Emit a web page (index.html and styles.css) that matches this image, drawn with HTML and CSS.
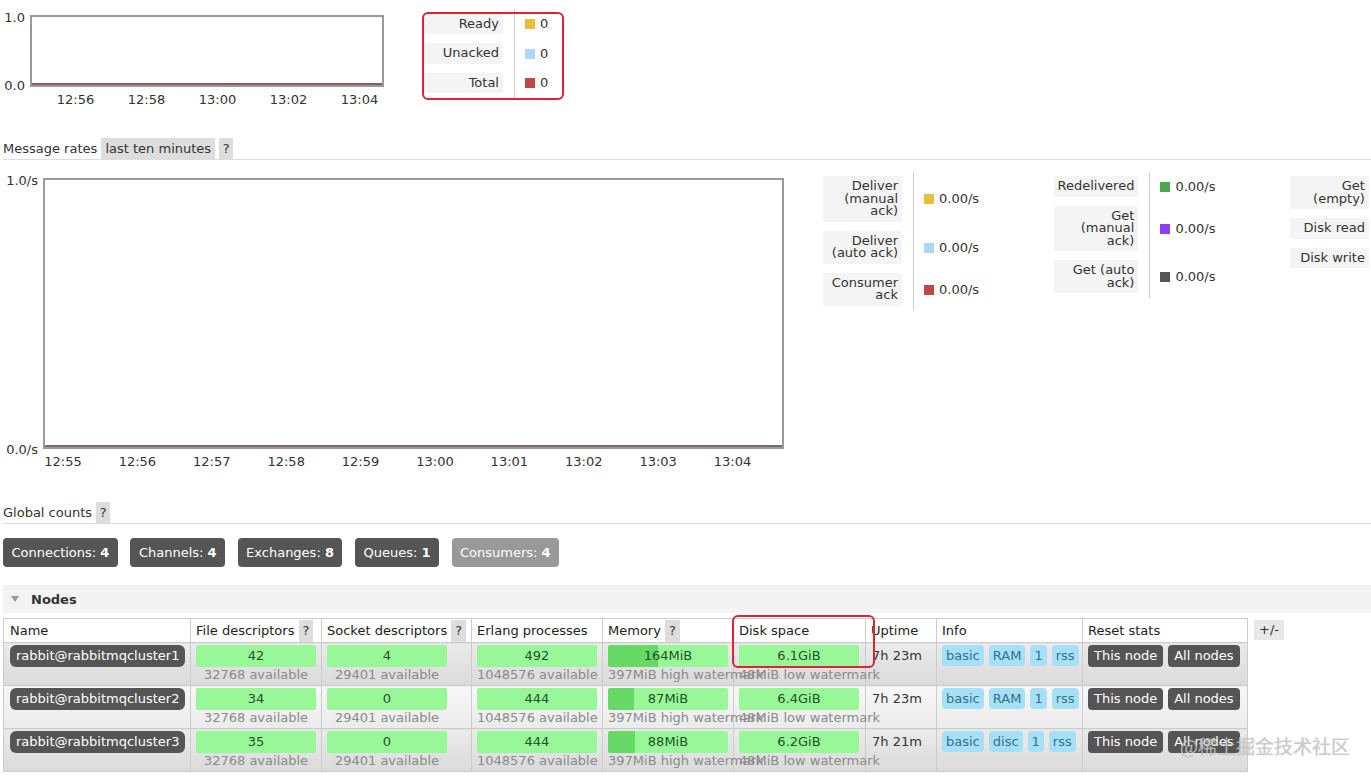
FILE: index.html
```html
<!DOCTYPE html>
<html>
<head>
<meta charset="utf-8">
<title>RabbitMQ Overview</title>
<link rel="stylesheet" href="styles.css">
</head>
<body>
<div class="page">
  <section class="queued">
    <div class="chart chart-small">
      <div class="yaxis"><span>1.0</span><span>0.0</span></div>
      <div class="plot"></div>
      <div class="xaxis"><span>12:56</span><span>12:58</span><span>13:00</span><span>13:02</span><span>13:04</span></div>
    </div>
    <div class="legend-wrap">
      <table class="legend">
        <tr><th><div class="lbl">Ready</div></th><td><span class="sw c-yellow"></span>0</td></tr>
        <tr><th><div class="lbl">Unacked</div></th><td><span class="sw c-blue"></span>0</td></tr>
        <tr><th><div class="lbl">Total</div></th><td><span class="sw c-red"></span>0</td></tr>
      </table>
      <span class="annot annot-top"></span>
    </div>
  </section>

  <h3 class="sub-h">Message rates <span class="opt">last ten minutes</span> <span class="help">?</span></h3>

  <section class="rates">
    <div class="chart chart-large">
      <div class="yaxis"><span>1.0/s</span><span>0.0/s</span></div>
      <div class="plot"></div>
      <div class="xaxis"><span>12:55</span><span>12:56</span><span>12:57</span><span>12:58</span><span>12:59</span><span>13:00</span><span>13:01</span><span>13:02</span><span>13:03</span><span>13:04</span></div>
    </div>
    <div class="legends">
      <table class="legend">
        <tr><th><div class="lbl">Deliver (manual ack)</div></th><td><span class="sw c-yellow"></span>0.00/s</td></tr>
        <tr><th><div class="lbl">Deliver (auto ack)</div></th><td><span class="sw c-blue"></span>0.00/s</td></tr>
        <tr><th><div class="lbl">Consumer ack</div></th><td><span class="sw c-red"></span>0.00/s</td></tr>
      </table>
      <table class="legend">
        <tr><th><div class="lbl">Redelivered</div></th><td><span class="sw c-green"></span>0.00/s</td></tr>
        <tr><th><div class="lbl">Get (manual ack)</div></th><td><span class="sw c-purple"></span>0.00/s</td></tr>
        <tr><th><div class="lbl">Get (auto ack)</div></th><td><span class="sw c-gray"></span>0.00/s</td></tr>
      </table>
      <table class="legend">
        <tr><th><div class="lbl">Get (empty)</div></th><td><span class="sw c-yellow"></span>0.00/s</td></tr>
        <tr><th><div class="lbl">Disk read</div></th><td><span class="sw c-blue"></span>0.00/s</td></tr>
        <tr><th><div class="lbl">Disk write</div></th><td><span class="sw c-red"></span>0.00/s</td></tr>
      </table>
    </div>
  </section>

  <h3 class="sub-h sub-h-counts">Global counts <span class="help">?</span></h3>

  <div class="counts">
    <span class="count">Connections: <b>4</b></span>
    <span class="count">Channels: <b>4</b></span>
    <span class="count">Exchanges: <b>8</b></span>
    <span class="count">Queues: <b>1</b></span>
    <span class="count count-light">Consumers: <b>4</b></span>
  </div>

  <div class="section-h"><span class="tri"></span>Nodes</div>

  <div class="nodes-wrap">
    <table class="nodes">
      <colgroup>
        <col class="w-name"><col class="w-fd"><col class="w-sd"><col class="w-ep"><col class="w-mem"><col class="w-disk"><col class="w-up"><col class="w-info"><col class="w-reset">
      </colgroup>
      <thead>
        <tr>
          <th>Name</th>
          <th>File descriptors <span class="help">?</span></th>
          <th>Socket descriptors <span class="help">?</span></th>
          <th>Erlang processes</th>
          <th>Memory <span class="help">?</span></th>
          <th class="th-disk">Disk space<span class="annot annot-disk"></span></th>
          <th>Uptime</th>
          <th>Info</th>
          <th>Reset stats</th>
        </tr>
      </thead>
      <tbody>
        <tr class="alt1">
          <td><span class="node-name">rabbit@rabbitmqcluster1</span></td>
          <td><div class="bar">42</div><div class="sub">32768 available</div></td>
          <td><div class="bar">4</div><div class="sub">29401 available</div></td>
          <td><div class="bar">492</div><div class="sub">1048576 available</div></td>
          <td><div class="bar bar-mem" style="--pct: 41.3%">164MiB</div><div class="sub">397MiB high watermark</div></td>
          <td><div class="bar">6.1GiB</div><div class="sub">48MiB low watermark</div></td>
          <td class="up">7h 23m</td>
          <td><span class="badge">basic</span><span class="badge">RAM</span><span class="badge">1</span><span class="badge">rss</span></td>
          <td><span class="btn">This node</span><span class="btn">All nodes</span></td>
        </tr>
        <tr class="alt2">
          <td><span class="node-name">rabbit@rabbitmqcluster2</span></td>
          <td><div class="bar">34</div><div class="sub">32768 available</div></td>
          <td><div class="bar">0</div><div class="sub">29401 available</div></td>
          <td><div class="bar">444</div><div class="sub">1048576 available</div></td>
          <td><div class="bar bar-mem" style="--pct: 21.9%">87MiB</div><div class="sub">397MiB high watermark</div></td>
          <td><div class="bar">6.4GiB</div><div class="sub">48MiB low watermark</div></td>
          <td class="up">7h 23m</td>
          <td><span class="badge">basic</span><span class="badge">RAM</span><span class="badge">1</span><span class="badge">rss</span></td>
          <td><span class="btn">This node</span><span class="btn">All nodes</span></td>
        </tr>
        <tr class="alt1">
          <td><span class="node-name">rabbit@rabbitmqcluster3</span></td>
          <td><div class="bar">35</div><div class="sub">32768 available</div></td>
          <td><div class="bar">0</div><div class="sub">29401 available</div></td>
          <td><div class="bar">444</div><div class="sub">1048576 available</div></td>
          <td><div class="bar bar-mem" style="--pct: 22.2%">88MiB</div><div class="sub">397MiB high watermark</div></td>
          <td><div class="bar">6.2GiB</div><div class="sub">48MiB low watermark</div></td>
          <td class="up">7h 21m</td>
          <td><span class="badge">basic</span><span class="badge">disc</span><span class="badge">1</span><span class="badge">rss</span></td>
          <td><span class="btn">This node</span><span class="btn">All nodes</span></td>
        </tr>
      </tbody>
    </table>
    <span class="plusminus">+/-</span>
  </div>
</div>
<div class="watermark">@稀土掘金技术社区</div>
</body>
</html>
```

FILE: styles.css
```css
* { box-sizing: border-box; }

html, body {
  margin: 0;
  padding: 0;
  background: #fff;
  overflow: hidden;
}

body {
  position: relative;
  width: 1371px;
  height: 779px;
  font-family: "DejaVu Sans", Verdana, sans-serif;
  font-size: 13px;
  color: #333;
}

.page {
  padding-left: 3px;
  width: 1600px;
}

/* ---------- charts ---------- */
.chart { display: grid; }

.yaxis {
  grid-column: 1;
  grid-row: 1;
  display: flex;
  flex-direction: column;
  justify-content: space-between;
  align-items: flex-end;
  padding-right: 5px;
  line-height: 15px;
  color: #333;
}

.plot {
  grid-column: 2;
  grid-row: 1;
  border: 2px solid #9a9a9a;
  background: #fff;
}

.xaxis {
  grid-column: 2;
  grid-row: 2;
  display: flex;
  margin-top: 6px;
  line-height: 14px;
  color: #333;
}

.xaxis span { flex: none; text-align: center; }

.chart-small {
  grid-template-columns: 27px 354px;
  margin-top: 6px;
}
.chart-small .yaxis { margin: -5px 0 -6px; }
.chart-small .plot {
  height: 72px;
  box-shadow: inset 0 -2px 0 #94595a;
}
.chart-small .xaxis { margin-left: 10px; }
.chart-small .xaxis span { width: 71px; }

.chart-large {
  grid-template-columns: 40px 741px;
  margin-top: 6px;
}
.chart-large .yaxis { margin: -5.5px 0 -7.5px; }
.chart-large .plot {
  height: 271px;
  box-shadow: inset 0 -2px 0 #7b6a70;
}
.chart-large .xaxis { margin-left: -17.2px; }
.chart-large .xaxis span { width: 74.4px; }

/* ---------- top section ---------- */
.queued {
  display: flex;
  align-items: flex-start;
  padding-top: 9px;
}

.legend-wrap {
  position: relative;
  margin-left: 40px;
}

/* ---------- legends ---------- */
.legend {
  border-collapse: collapse;
}

.legend th {
  box-sizing: content-box;
  width: 79px;
  padding: 4.5px 11px 4.5px 0;
  font-weight: normal;
  vertical-align: middle;
}

.legend .lbl {
  display: block;
  background: #f4f4f4;
  border-radius: 2px;
  padding: 4px;
  line-height: 12.5px;
  text-align: right;
  color: #333;
}

.legend td {
  width: 140px;
  border-left: 1px solid #ccc;
  padding: 0 0 0 10px;
  vertical-align: middle;
  white-space: nowrap;
  color: #333;
}

.sw {
  display: inline-block;
  width: 10px;
  height: 10px;
  margin-right: 5px;
  vertical-align: -1px;
}
.c-yellow { background: #e9bd3f; }
.c-blue { background: #afd8f8; }
.c-red { background: #c34648; }
.c-green { background: #4da74d; }
.c-purple { background: #8a3ff0; }
.c-gray { background: #555; }

/* ---------- annotations ---------- */
.annot {
  position: absolute;
  border: 2px solid #dd2430;
  border-radius: 6px;
  z-index: 3;
  pointer-events: none;
}

.annot-top {
  left: -2px;
  top: 3px;
  width: 142px;
  height: 88px;
}

.th-disk { position: relative; }

.annot-disk {
  left: -2px;
  top: -4px;
  width: 143px;
  height: 53px;
}

/* ---------- headings ---------- */
.sub-h {
  margin: 31px 0 0;
  font-size: 13px;
  font-weight: normal;
  line-height: 21px;
  height: 22px;
  border-bottom: 1px solid #ddd;
  color: #333;
}

.sub-h-counts { margin-top: 33px; }

.opt, .help {
  display: inline-block;
  background: #ddd;
  color: #333;
}
.opt { padding: 0 4px; }
.help { padding: 0 3.5px; }

.rates {
  display: flex;
  align-items: flex-start;
  margin-top: 12px;
}

.legends {
  display: flex;
  align-items: flex-start;
  margin-left: 39px;
  margin-top: -0.5px;
}

/* ---------- global counts ---------- */
.counts {
  display: flex;
  gap: 12.5px;
  margin-top: 14px;
}

.count {
  display: inline-block;
  height: 29px;
  line-height: 29px;
  padding: 0 8.5px;
  background: #555;
  color: #fff;
  border-radius: 4px;
}
.count b { font-weight: bold; }
.count-light { background: #999; }

/* ---------- nodes ---------- */
.section-h {
  display: flex;
  align-items: center;
  margin-top: 18px;
  height: 28px;
  padding-left: 8px;
  background: #f3f3f3;
  font-weight: bold;
  font-size: 13px;
  color: #333;
}

.tri {
  width: 0;
  height: 0;
  border-left: 4.5px solid transparent;
  border-right: 4.5px solid transparent;
  border-top: 6px solid #999;
  margin-right: 12px;
}

.nodes-wrap {
  display: flex;
  align-items: flex-start;
  gap: 6px;
  margin-top: 5px;
}

.nodes {
  border-collapse: collapse;
  table-layout: fixed;
  width: 1245px;
  border: 1px solid #ccc;
}

.w-name { width: 187px; }
.w-fd { width: 131px; }
.w-sd { width: 150px; }
.w-ep { width: 131px; }
.w-mem { width: 131px; }
.w-disk { width: 132px; }
.w-up { width: 71px; }
.w-info { width: 146px; }
.w-reset { width: 165px; }

.nodes th {
  height: 24px;
  padding: 0 5px;
  text-align: left;
  font-weight: normal;
  color: #222;
  border: 1px solid #ccc;
  background: #fff;
  white-space: nowrap;
  vertical-align: middle;
}
.nodes th:first-child { padding-left: 6px; }
.nodes th .help { line-height: 22px; padding: 0 4px; }

.nodes td {
  padding: 2px 5px 3px;
  border: 1px solid #ccc;
  vertical-align: top;
  white-space: nowrap;
}
.nodes td:first-child { padding-left: 6px; }

.nodes tr.alt1 td { background: linear-gradient(#ebebeb, #dadada); }
.nodes tr.alt2 td { background: linear-gradient(#f7f7f7, #ebebeb); }

.node-name {
  display: inline-block;
  background: #555;
  color: #fff;
  border-radius: 6px;
  padding: 0 6px;
  line-height: 22px;
}

.bar {
  width: 120px;
  height: 22px;
  line-height: 22px;
  text-align: center;
  background: #98f898;
  color: #24502a;
  border-radius: 2px;
}

.bar-mem {
  background: linear-gradient(to right, #66d966 var(--pct), #98f898 var(--pct));
}

.sub {
  width: 120px;
  text-align: center;
  white-space: nowrap;
  color: #8a8a8a;
  line-height: 15px;
}

.nodes td.up {
  padding-left: 6px;
  line-height: 22px;
  color: #333;
}

.badge {
  display: inline-block;
  background: #a6e0f6;
  color: #356f90;
  border-radius: 4px;
  padding: 0 4px;
  line-height: 21px;
  margin-right: 5px;
}

.btn {
  display: inline-block;
  background: #555;
  color: #fff;
  border-radius: 4px;
  padding: 0 6px;
  line-height: 22px;
  margin-right: 5px;
}

.plusminus {
  display: inline-block;
  margin-top: 2px;
  padding: 0 5px;
  line-height: 20px;
  background: #e8e8e8;
  color: #333;
}

/* ---------- watermark ---------- */
.watermark {
  position: absolute;
  right: 21px;
  top: 733px;
  font-family: "Noto Sans CJK SC", "DejaVu Sans", sans-serif;
  font-size: 19px;
  line-height: 26px;
  color: rgba(205, 205, 205, 0.8);
  text-shadow: 0 0 1px rgba(120, 120, 120, 0.45);
  z-index: 5;
}
```
